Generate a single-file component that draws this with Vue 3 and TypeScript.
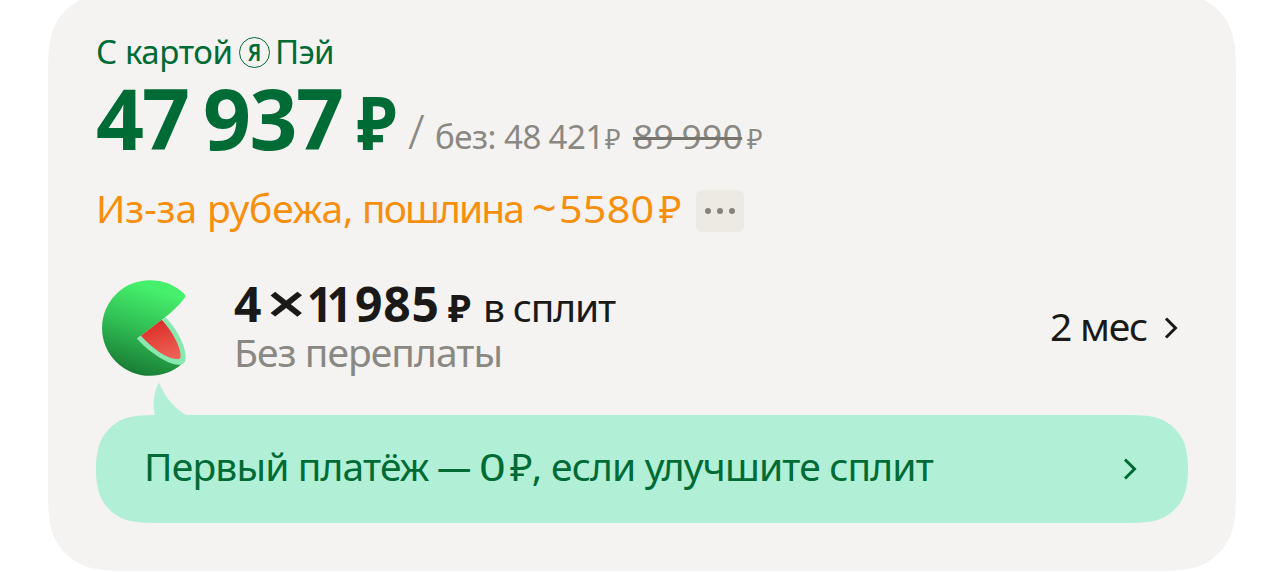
<template>
  <main class="card">
    <svg class="shape" :width="card.w" :height="card.h" aria-hidden="true">
      <path :d="cardPath" fill="#f4f3f1" />
    </svg>

    <div class="content">
      <div class="pay">
        <span class="pay__label">С картой</span>
        <span class="pay__logo"><span class="pay__letter">Я</span></span>
        <span class="pay__name">Пэй</span>
      </div>

      <div class="price">
        <span class="price__thousands">47</span>
        <span class="price__units">937</span>
        <span class="price__currency">₽</span>
        <span class="price__slash">/</span>
        <span class="price__without">без:</span>
        <span class="price__regular">48 421</span>
        <span class="price__small">₽</span>
        <span class="price__old">89 990</span>
        <span class="price__small">₽</span>
      </div>

      <div class="duty">
        <span class="duty__origin">Из-за рубежа,</span>
        <span class="duty__text">пошлина</span>
        <span class="duty__approx">~</span>
        <span class="duty__sum">5580</span>
        <span class="duty__currency">₽</span>
        <button class="duty__more" type="button" aria-label="Подробнее">
          <i v-for="n in 3" :key="n" class="duty__dot"></i>
        </button>
      </div>

      <div class="split">
        <svg class="split__icon" viewBox="66 60 253 288" aria-hidden="true">
          <defs>
            <linearGradient id="skin" x1="0.7" y1="0" x2="0.42" y2="1">
              <stop offset="0.1" stop-color="#46f06c" />
              <stop offset="0.52" stop-color="#31bf54" />
              <stop offset="1" stop-color="#187a34" />
            </linearGradient>
            <linearGradient id="flesh" x1="0.3" y1="0" x2="0.6" y2="1">
              <stop offset="0.1" stop-color="#dc3029" />
              <stop offset="1" stop-color="#ee6056" />
            </linearGradient>
          </defs>
          <path
            fill="url(#skin)"
            d="M312 99C286 74 250 60 210 60A144 144 0 0 0 210 348C248 348 279 335 305 314L172 236L245 180C270 162 297 138 315 113Q321 107 312 99Z"
          />
          <path
            fill="#88e8b0"
            d="M171 236L183 228L246 180L258 172C290 205 318 255 318 292C318 310 308 316 295 315C262 313 205 275 171 236Z"
          />
          <path
            fill="url(#flesh)"
            d="M183 227L246 179C275 210 303 260 303 288C303 297 297 298 288 297C258 295 215 262 183 227Z"
          />
        </svg>
        <div class="split__info">
          <div class="split__line">
            <span class="split__count">4</span>
            <span class="split__times">×</span>
            <span class="split__thousands">11</span>
            <span class="split__units">985</span>
            <span class="split__currency">₽</span>
            <span class="split__label">в сплит</span>
          </div>
          <div class="split__note">Без переплаты</div>
        </div>
        <div class="split__term">2 мес</div>
        <svg class="split__arrow" width="14" height="22" viewBox="0 0 14 22">
          <path :d="chevron" />
        </svg>
      </div>

      <div class="banner">
        <svg class="shape" :width="banner.w" :height="banner.h" aria-hidden="true">
          <path :d="bannerPath" fill="#b1efd7" />
        </svg>
        <svg class="banner__tail" width="36" height="34" viewBox="0 0 36 34" aria-hidden="true">
          <path d="M7 0.5C1.5 11 0.5 22 3 34H36C23 27 13 16 7 0.5Z" fill="#b1efd7" />
        </svg>
        <div class="banner__text">
          <span class="banner__title">Первый платёж</span>
          <span class="banner__dash">—</span>
          <span class="banner__zero">0</span>
          <span class="banner__currency">₽,</span>
          <span class="banner__condition">если улучшите сплит</span>
        </div>
        <svg class="banner__arrow" width="14" height="22" viewBox="0 0 14 22">
          <path :d="chevron" />
        </svg>
      </div>
    </div>
  </main>
</template>

<script setup lang="ts">
interface Box {
  w: number
  h: number
  r: number
}

const card: Box = { w: 1188, h: 578, r: 60 }
const banner: Box = { w: 1092, h: 108, r: 46 }

const chevron = 'M2 1.5L11.5 11L2 20.5'

// Rectangle with continuous (squircle-like) corners
function smoothRect({ w, h, r }: Box): string {
  const ex = Math.min(1.5287 * r, w / 2)
  const ey = Math.min(1.5287 * r, h / 2)
  const cx = Math.min(1.0885 * r, ex)
  const cy = Math.min(1.0885 * r, ey)
  const a = 0.8684 * r
  const b = 0.6315 * r
  const c = 0.0749 * r
  const d = 0.3728 * r
  const e = 0.1691 * r

  return [
    `M${ex} 0H${w - ex}`,
    `C${w - cx} 0 ${w - a} 0 ${w - b} ${c}`,
    `C${w - d} ${e} ${w - e} ${d} ${w - c} ${b}`,
    `C${w} ${a} ${w} ${cy} ${w} ${ey}`,
    `V${h - ey}`,
    `C${w} ${h - cy} ${w} ${h - a} ${w - c} ${h - b}`,
    `C${w - e} ${h - d} ${w - d} ${h - e} ${w - b} ${h - c}`,
    `C${w - a} ${h} ${w - cx} ${h} ${w - ex} ${h}`,
    `H${ex}`,
    `C${cx} ${h} ${a} ${h} ${b} ${h - c}`,
    `C${d} ${h - e} ${e} ${h - d} ${c} ${h - b}`,
    `C0 ${h - a} 0 ${h - cy} 0 ${h - ey}`,
    `V${ey}`,
    `C0 ${cy} 0 ${a} ${c} ${b}`,
    `C${e} ${d} ${d} ${e} ${b} ${c}`,
    `C${a} 0 ${cx} 0 ${ex} 0Z`,
  ].join('')
}

const cardPath = smoothRect(card)
const bannerPath = smoothRect(banner)
</script>

<style>
body {
  background: #fff;
  overflow: hidden;
}
</style>

<style scoped>
.card {
  position: relative;
  width: 1188px;
  height: 578px;
  margin: -7px 0 0 48px;
  font-family: 'Noto Sans', sans-serif;
  white-space: nowrap;
}

.shape {
  position: absolute;
  top: 0;
  left: 0;
}

.content {
  position: relative;
  display: flex;
  flex-direction: column;
  box-sizing: border-box;
  height: 100%;
  padding: 39px 48px 0;
}

.pay {
  display: flex;
  height: 40px;
  color: #006b35;
  font-size: 33px;
  line-height: 40px;
}

.pay__label {
  width: 143px;
  letter-spacing: -0.4px;
}

.pay__logo {
  box-sizing: border-box;
  width: 31px;
  height: 31px;
  margin: 5px 5px 0 0;
  border: 1.5px solid #006b35;
  border-radius: 50%;
  text-align: center;
}

.pay__letter {
  display: block;
  font-size: 24px;
  font-weight: 600;
  line-height: 27px;
  transform: scaleX(0.85);
}

.pay__name {
  letter-spacing: -0.8px;
}

.price {
  display: flex;
  align-items: baseline;
  height: 84px;
  margin-top: 4px;
  color: #8a8882;
  font-size: 33px;
  line-height: 1;
}

.price__thousands,
.price__units,
.price__currency {
  color: #006b35;
  font-size: 84px;
  font-weight: 700;
}

.price__thousands {
  width: 107px;
  letter-spacing: -2px;
}

.price__units {
  width: 154px;
  letter-spacing: -1.5px;
}

.price__currency {
  width: 51px;
  font-size: 73px;
  transform: scaleX(0.9);
  transform-origin: left;
}

.price__slash {
  width: 27px;
  font-size: 48px;
  font-weight: 300;
  transform: translateY(-1px);
}

.price__without {
  width: 69px;
  letter-spacing: -0.5px;
  transform: translateY(-1px);
}

.price__regular {
  width: 101px;
  letter-spacing: -0.3px;
  word-spacing: -1px;
  transform: translateY(-1px);
}

.price__small {
  width: 28px;
  font-size: 27px;
  transform: translateY(-1px);
}

.price__old {
  position: relative;
  width: 114px;
  letter-spacing: 0.3px;
  word-spacing: -2px;
  transform: translateY(-1px) scaleX(1.07);
  transform-origin: left;
}

.price__old::after {
  content: '';
  position: absolute;
  top: 17px;
  left: 0;
  width: 102px;
  height: 3px;
  background: #76746c;
}

.duty {
  display: flex;
  height: 42px;
  margin-top: 27px;
  color: #f78f0e;
  font-size: 39px;
  line-height: 42px;
}

.duty__origin {
  width: 266px;
  letter-spacing: -0.15px;
}

.duty__text {
  width: 170px;
  letter-spacing: -1.9px;
}

.duty__approx {
  width: 27px;
  font-size: 43px;
}

.duty__sum {
  width: 100px;
  letter-spacing: 0.2px;
  transform: scaleX(1.06);
  transform-origin: left;
}

.duty__currency {
  width: 37px;
}

.duty__more {
  display: flex;
  align-items: center;
  justify-content: center;
  gap: 6px;
  width: 48px;
  height: 42px;
  margin-top: 3px;
  padding: 0;
  border: 0;
  border-radius: 6px;
  background: #eceae3;
}

.duty__dot {
  width: 6px;
  height: 6px;
  border-radius: 50%;
  background: #84827b;
}

.split {
  display: flex;
  align-items: center;
  height: 98px;
  margin-top: 50px;
  color: #1a1917;
  font-size: 39px;
}

.split__icon {
  width: 84px;
  height: 96px;
  margin: 0 48px 0 6px;
}

.split__info {
  flex: 1;
  height: 98px;
}

.split__line {
  display: flex;
  align-items: baseline;
  box-sizing: border-box;
  height: 50px;
  padding-top: 1px;
  font-size: 48px;
  font-weight: 700;
  line-height: 1;
}

.split__count {
  width: 32px;
}

.split__times {
  width: 41px;
  font-size: 56px;
  font-weight: 600;
  line-height: 36px;
  transform: translateY(2px) scaleX(1.27);
  transform-origin: left;
}

.split__thousands {
  width: 48px;
  letter-spacing: -6px;
  transform: scaleX(0.92);
  transform-origin: left;
}

.split__units {
  width: 93px;
  letter-spacing: 0.8px;
}

.split__currency {
  width: 35px;
  font-size: 38px;
}

.split__label {
  font-size: 39px;
  font-weight: 400;
  letter-spacing: -1.2px;
}

.split__note {
  margin-top: 2px;
  color: #8a8882;
  letter-spacing: -0.95px;
  line-height: 42px;
}

.split__term {
  margin-bottom: 4px;
  letter-spacing: -1.2px;
  line-height: 42px;
}

.split__arrow,
.banner__arrow {
  fill: none;
  stroke: currentColor;
  stroke-width: 3;
}

.split__arrow {
  margin: 0 10px 0 17px;
}

.banner {
  position: relative;
  display: flex;
  align-items: center;
  justify-content: space-between;
  box-sizing: border-box;
  height: 108px;
  margin-top: 38px;
  padding: 0 51px 0 48px;
  color: #006b35;
}

.banner__tail {
  position: absolute;
  top: -33px;
  left: 56px;
}

.banner__text {
  position: relative;
  display: flex;
  margin-bottom: 6px;
  font-size: 39px;
  line-height: 42px;
}

.banner__title {
  width: 293px;
  letter-spacing: -0.85px;
}

.banner__dash {
  width: 42px;
  transform: scaleX(0.88);
  transform-origin: left;
}

.banner__zero {
  width: 31px;
  transform: scaleX(1.2);
  transform-origin: left;
}

.banner__currency {
  width: 41px;
  letter-spacing: -1px;
}

.banner__condition {
  letter-spacing: -0.85px;
}

.banner__arrow {
  position: relative;
}
</style>
